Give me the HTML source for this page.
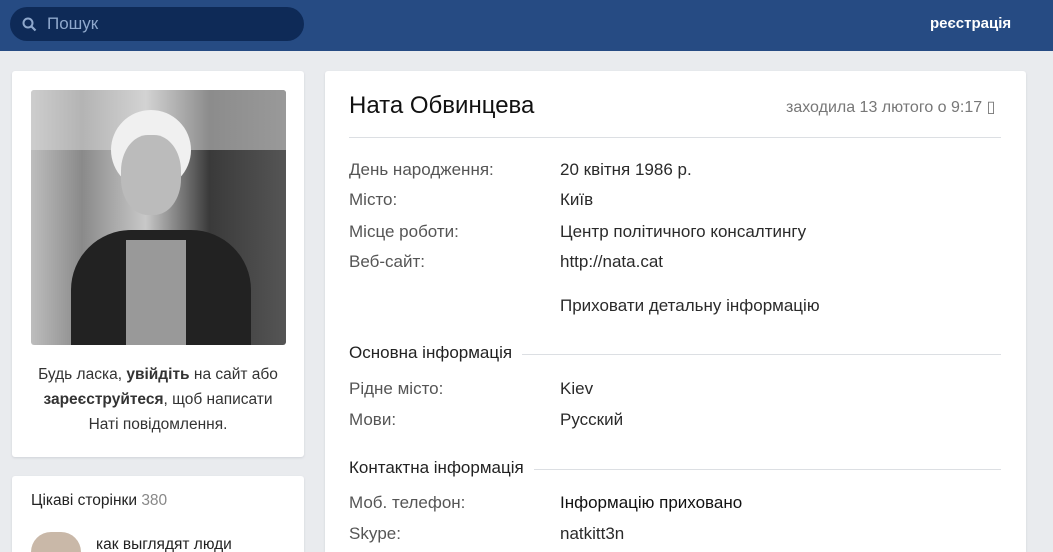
<!DOCTYPE html>
<html style="width:1053px;height:552px;overflow:hidden"><head><meta charset="utf-8"><style>
body{margin:0;width:1053px;height:552px;overflow:hidden;background:#e9ebee;font-family:"Liberation Sans",sans-serif;position:relative}
.hdr{position:absolute;left:0;top:0;width:1053px;height:51px;background:#264b83}
.search{position:absolute;left:10px;top:7px;width:294px;height:34px;border-radius:17px;background:#0e2a57;color:#8fa8cc;font-size:17px;line-height:34px}
.reg{position:absolute;left:930px;top:15px;color:#fff;font-weight:bold;font-size:15px}
.card{position:absolute;background:#fff;border-radius:3px;box-shadow:0 1px 2px #d0d3d8}
.photo{position:absolute;left:31px;top:90px;width:255px;height:255px;border-radius:3px;background:linear-gradient(90deg,#bdbdbd 0%,#8a8a8a 20%,#c8c8c8 45%,#3a3a3a 70%,#555 100%);overflow:hidden}
.t{position:absolute;font-size:17px;color:#222;white-space:nowrap}
.l{color:#555}
.v{color:#2a2a2a}
.sec{position:absolute;font-size:17px;color:#222;background:#fff;padding-right:10px}
.line{position:absolute;height:1px;background:#dcdfe3}
</style></head><body>
<div class="hdr"></div>
<div class="search"><svg style="position:absolute;left:12px;top:10px" width="15" height="15" viewBox="0 0 15 15"><circle cx="6" cy="6" r="4.5" fill="none" stroke="#8fa8cc" stroke-width="2"/><path d="M9.5 9.5L13.5 13.5" stroke="#8fa8cc" stroke-width="2.2"/></svg><span style="position:absolute;left:37px">Пошук</span></div>
<div class="reg">реєстрація</div>
<div class="card" style="left:12px;top:71px;width:292px;height:386px"></div>
<div class="photo">
<div style="position:absolute;left:0;top:0;width:255px;height:60px;background:#ddd;opacity:.5"></div>
<div style="position:absolute;left:80px;top:20px;width:80px;height:80px;border-radius:50%;background:#f0f0f0"></div>
<div style="position:absolute;left:90px;top:45px;width:60px;height:80px;border-radius:45%;background:#bbb"></div>
<div style="position:absolute;left:40px;top:140px;width:180px;height:115px;border-radius:60px 60px 0 0;background:#222"></div>
<div style="position:absolute;left:95px;top:150px;width:60px;height:105px;background:#999"></div>
</div>
<div class="t" style="left:12px;width:292px;text-align:center;top:362px;font-size:15.5px;line-height:25px;white-space:normal;color:#333">Будь ласка, <b>увійдіть</b> на сайт або<br><b>зареєструйтеся</b>, щоб написати<br>Наті повідомлення.</div>
<div class="card" style="left:12px;top:476px;width:292px;height:76px;border-radius:3px 3px 0 0"></div>
<div class="t" style="left:31px;top:492px;font-size:15.5px">Цікаві сторінки <span style="color:#888">380</span></div>
<div style="position:absolute;left:31px;top:532px;width:50px;height:20px;border-radius:25px 25px 0 0;background:#c9b8a8"></div>
<div class="t" style="left:96px;top:536px;font-size:15.5px">как выглядят люди</div>
<div class="card" style="left:325px;top:71px;width:701px;height:481px;border-radius:3px 3px 0 0"></div>
<div class="t" style="left:349px;top:92px;font-size:24px;color:#111">Ната Обвинцева</div>
<div class="t" style="left:786px;top:97px;font-size:16px;color:#777">заходила 13 лютого о 9:17 ▯</div>
<div class="line" style="left:349px;top:137px;width:652px"></div>
<div class="t l" style="left:349px;top:160px">День народження:</div><div class="t v" style="left:560px;top:160px">20 квітня 1986 р.</div>
<div class="t l" style="left:349px;top:190px">Місто:</div><div class="t v" style="left:560px;top:190px">Київ</div>
<div class="t l" style="left:349px;top:222px">Місце роботи:</div><div class="t v" style="left:560px;top:222px">Центр політичного консалтингу</div>
<div class="t l" style="left:349px;top:252px">Веб-сайт:</div><div class="t v" style="left:560px;top:252px">http://nata.cat</div>
<div class="t v" style="left:560px;top:296px">Приховати детальну інформацію</div>
<div class="line" style="left:349px;top:354px;width:652px"></div>
<div class="sec" style="left:349px;top:343px">Основна інформація</div>
<div class="t l" style="left:349px;top:379px">Рідне місто:</div><div class="t v" style="left:560px;top:379px">Kiev</div>
<div class="t l" style="left:349px;top:410px">Мови:</div><div class="t v" style="left:560px;top:410px">Русский</div>
<div class="line" style="left:349px;top:469px;width:652px"></div>
<div class="sec" style="left:349px;top:458px">Контактна інформація</div>
<div class="t l" style="left:349px;top:493px">Моб. телефон:</div><div class="t" style="left:560px;top:493px;color:#111">Інформацію приховано</div>
<div class="t l" style="left:349px;top:524px">Skype:</div><div class="t v" style="left:560px;top:524px">natkitt3n</div>
</body></html>
